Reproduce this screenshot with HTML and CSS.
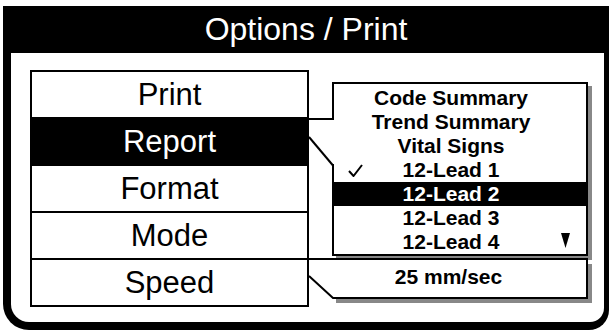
FILE: index.html
```html
<!DOCTYPE html>
<html>
<head>
<meta charset="utf-8">
<link rel="stylesheet" href="styles.css">
</head>
<body>
<div class="frame">
  <div class="title">Options / Print</div>
  <div class="content">
    <div class="menu">
      <div class="item">Print</div>
      <div class="item active">Report</div>
      <div class="item">Format</div>
      <div class="item">Mode</div>
      <div class="item">Speed</div>
    </div>
    <div class="side">
      <div class="list">
        <svg class="pointer" width="25" height="49" viewBox="0 0 25 49">
          <polygon points="0,3 25,3 25,47 23,47 0,20" fill="#fff"/>
          <path d="M0 2 H24" stroke="#000" stroke-width="2" fill="none"/>
          <path d="M0 20 L24 48.5" stroke="#000" stroke-width="2" fill="none"/>
        </svg>
        <div class="row">Code Summary</div>
        <div class="row">Trend Summary</div>
        <div class="row">Vital Signs</div>
        <div class="row"><svg class="check" width="15" height="13" viewBox="0 0 15 13"><path d="M1 7 L5.5 12 L14 1" stroke="#000" stroke-width="2" fill="none"/></svg>12-Lead 1</div>
        <div class="row sel">12-Lead 2</div>
        <div class="row">12-Lead 3</div>
        <div class="row">12-Lead 4<svg class="arrow" width="9" height="15" viewBox="0 0 9 15"><polygon points="0,0 9,0 4.5,15" fill="#000"/></svg></div>
      </div>
      <div class="speed">
        <svg class="speed-shape" width="284" height="46" viewBox="0 0 284 46">
          <rect x="279" y="6" width="4" height="39" fill="#888"/>
          <rect x="27" y="41" width="256" height="4" fill="#888"/>
          <polygon points="0,0 279,0 279,41 24,41 0,18" fill="#fff"/>
          <path d="M0 1 H278 V40 H24 L0 18" stroke="#000" stroke-width="2" fill="none"/>
        </svg>
        <span class="speed-text">25 mm/sec</span>
      </div>
    </div>
  </div>
</div>
</body>
</html>
```
FILE: styles.css
```css
html, body {
  margin: 0;
  padding: 0;
  background: #fff;
}
body {
  font-family: "Liberation Sans", Arial, Helvetica, sans-serif;
  color: #000;
}
.frame {
  margin: 6px 0 0 3px;
  width: 606px;
  height: 324px;
  background: #000;
  border-radius: 0 0 20px 26px;
  display: flex;
  flex-direction: column;
}
.title {
  height: 47px;
  line-height: 47px;
  text-align: center;
  color: #fff;
  font-size: 32px;
}
.content {
  flex: 1;
  margin: 0 5px 8px 8px;
  background: #fff;
  border-radius: 0 0 14px 18px;
  display: flex;
  align-items: flex-start;
  padding: 17px 0 0 19px;
}
.menu {
  width: 279px;
  box-sizing: border-box;
  border: 2px solid #000;
}
.item {
  height: 45px;
  line-height: 45px;
  text-align: center;
  font-size: 31px;
}
.item + .item {
  border-top: 2px solid #000;
}
.item.active {
  background: #000;
  color: #fff;
}
.side {
  width: 279px;
  display: flex;
  flex-direction: column;
}
.list {
  position: relative;
  margin: 12px 0 0 23px;
  width: 256px;
  height: 174px;
  box-sizing: border-box;
  border: 2px solid #000;
  background: #fff;
  box-shadow: 4px 4px 0 #888;
  padding-top: 2px;
}
.pointer {
  position: absolute;
  left: -25px;
  top: 33px;
  overflow: visible;
}
.row {
  position: relative;
  height: 24px;
  line-height: 24px;
  font-size: 21px;
  font-weight: bold;
  text-align: center;
  padding-right: 18px;
}
.row.sel {
  background: #000;
  color: #fff;
}
.check {
  position: absolute;
  left: 14px;
  top: 6px;
}
.arrow {
  position: absolute;
  right: 16px;
  top: 3px;
}
.speed {
  position: relative;
  margin-top: 2px;
  height: 41px;
  display: flex;
  align-items: center;
  justify-content: center;
  padding-bottom: 3px;
  box-sizing: border-box;
}
.speed-shape {
  position: absolute;
  left: 0;
  top: 0;
  overflow: visible;
}
.speed-text {
  position: relative;
  font-size: 21px;
  font-weight: bold;
}
```
